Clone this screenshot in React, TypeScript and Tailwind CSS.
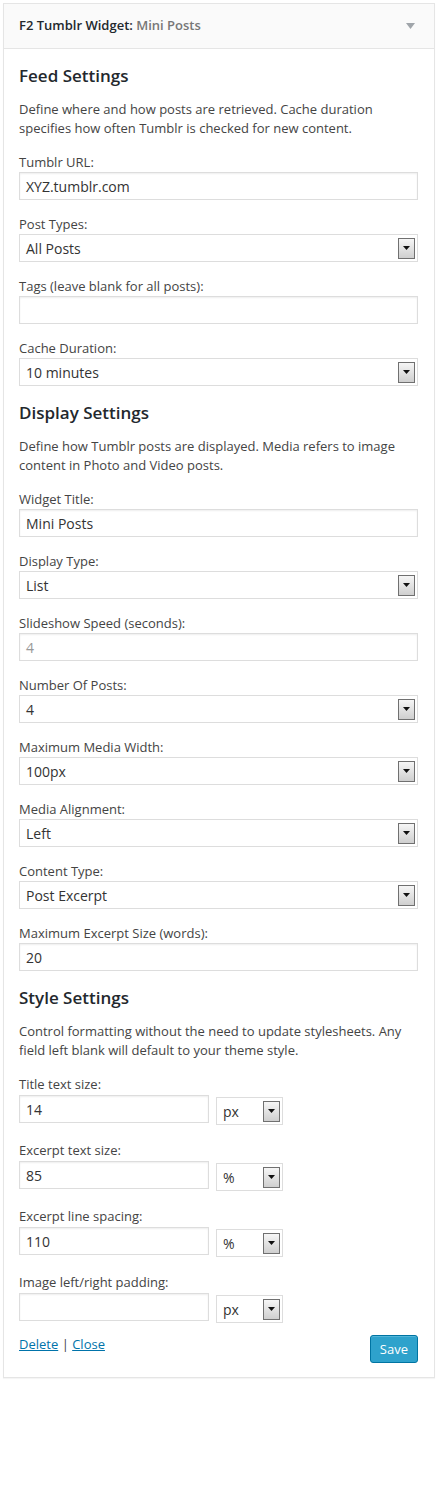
const font = { fontFamily: '"Open Sans", "Liberation Sans", sans-serif' }

function SelectArrow() {
  return (
    <span className="flex h-[21px] w-[17px] items-center justify-center border border-[#707070] bg-gradient-to-b from-[#f6f6f6] to-[#cfcfcf]">
      <svg width="7" height="4" viewBox="0 0 7 4">
        <path d="M0 0h7L3.5 4z" fill="#111" />
      </svg>
    </span>
  )
}

function Select({ value, small = false }: { value: string; small?: boolean }) {
  return (
    <div
      className={`flex h-[28px] items-center justify-between border border-[#dddddd] bg-white pl-[6px] pr-[2px] text-[14px] text-[#333] ${
        small ? 'w-[67px]' : 'w-full'
      }`}
    >
      <span>{value}</span>
      <SelectArrow />
    </div>
  )
}

function TextInput({ value = '', muted = false, className = 'w-full' }: { value?: string; muted?: boolean; className?: string }) {
  return (
    <div
      className={`flex h-[28px] items-center border border-[#dddddd] bg-white px-[6px] text-[14px] shadow-[inset_0_1px_2px_rgba(0,0,0,0.07)] ${
        muted ? 'text-[#999]' : 'text-[#333]'
      } ${className}`}
    >
      {value}
    </div>
  )
}

function Label({ children }: { children: React.ReactNode }) {
  return <div className="text-[13px] leading-[18px] text-[#444]">{children}</div>
}

function Field({ label, children }: { label: string; children: React.ReactNode }) {
  return (
    <div className="mb-[15px]">
      <Label>{label}</Label>
      <div className="mt-[1px]">{children}</div>
    </div>
  )
}

function UnitField({ label, value, unit }: { label: string; value: string; unit: string }) {
  return (
    <div className="mb-[16px]">
      <Label>{label}</Label>
      <div className="mt-[2px] flex items-start gap-[7px]">
        <TextInput value={value} className="w-[190px]" />
        <div className="mt-[2px]">
          <Select value={unit} small />
        </div>
      </div>
    </div>
  )
}

function Heading({ children }: { children: React.ReactNode }) {
  return <h3 className="text-[17px] font-semibold leading-[24px] text-[#23282d]">{children}</h3>
}

function Desc({ children }: { children: React.ReactNode }) {
  return <p className="mb-[15px] mt-[12px] text-[13px] leading-[19px] text-[#444]">{children}</p>
}

export default function App() {
  return (
    <div className="min-h-[1500px] bg-white p-[3px]" style={font}>
      <div className="border border-[#e5e5e5] bg-white shadow-[0_1px_1px_rgba(0,0,0,0.04)]">
        {/* header */}
        <div className="flex h-[45px] items-center justify-between border-b border-[#e5e5e5] bg-[#fafafa] pl-[15px] pr-[19px]">
          <div className="text-[13px] font-semibold text-[#23282d]">
            F2 Tumblr Widget: <span className="text-[#777]">Mini Posts</span>
          </div>
          <svg width="9" height="6" viewBox="0 0 9 6">
            <path d="M0 0h9L4.5 6z" fill="#a0a5aa" />
          </svg>
        </div>

        <div className="px-[15px] pb-[14px] pr-[16px] pt-[15px]">
          <Heading>Feed Settings</Heading>
          <Desc>
            Define where and how posts are retrieved. Cache duration specifies how often Tumblr is checked for new
            content.
          </Desc>
          <Field label="Tumblr URL:">
            <TextInput value="XYZ.tumblr.com" />
          </Field>
          <Field label="Post Types:">
            <Select value="All Posts" />
          </Field>
          <Field label="Tags (leave blank for all posts):">
            <TextInput />
          </Field>
          <Field label="Cache Duration:">
            <Select value="10 minutes" />
          </Field>

          <Heading>Display Settings</Heading>
          <Desc>Define how Tumblr posts are displayed. Media refers to image content in Photo and Video posts.</Desc>
          <Field label="Widget Title:">
            <TextInput value="Mini Posts" />
          </Field>
          <Field label="Display Type:">
            <Select value="List" />
          </Field>
          <Field label="Slideshow Speed (seconds):">
            <TextInput value="4" muted />
          </Field>
          <Field label="Number Of Posts:">
            <Select value="4" />
          </Field>
          <Field label="Maximum Media Width:">
            <Select value="100px" />
          </Field>
          <Field label="Media Alignment:">
            <Select value="Left" />
          </Field>
          <Field label="Content Type:">
            <Select value="Post Excerpt" />
          </Field>
          <Field label="Maximum Excerpt Size (words):">
            <TextInput value="20" />
          </Field>

          <Heading>Style Settings</Heading>
          <Desc>
            Control formatting without the need to update stylesheets. Any field left blank will default to your theme
            style.
          </Desc>
          <UnitField label="Title text size:" value="14" unit="px" />
          <UnitField label="Excerpt text size:" value="85" unit="%" />
          <UnitField label="Excerpt line spacing:" value="110" unit="%" />
          <UnitField label="Image left/right padding:" value="" unit="px" />

          <div className="-mt-[4px] flex items-start justify-between">
            <div className="text-[13px] leading-[18px] text-[#444]">
              <a className="text-[#0073aa] underline">Delete</a> | <a className="text-[#0073aa] underline">Close</a>
            </div>
            <button className="h-[28px] rounded-[3px] border border-[#0074a2] bg-[#2ea2cc] px-[9px] text-[13px] leading-[26px] text-white shadow-[inset_0_1px_0_rgba(120,200,230,0.5)]">
              Save
            </button>
          </div>
        </div>
      </div>
    </div>
  )
}
